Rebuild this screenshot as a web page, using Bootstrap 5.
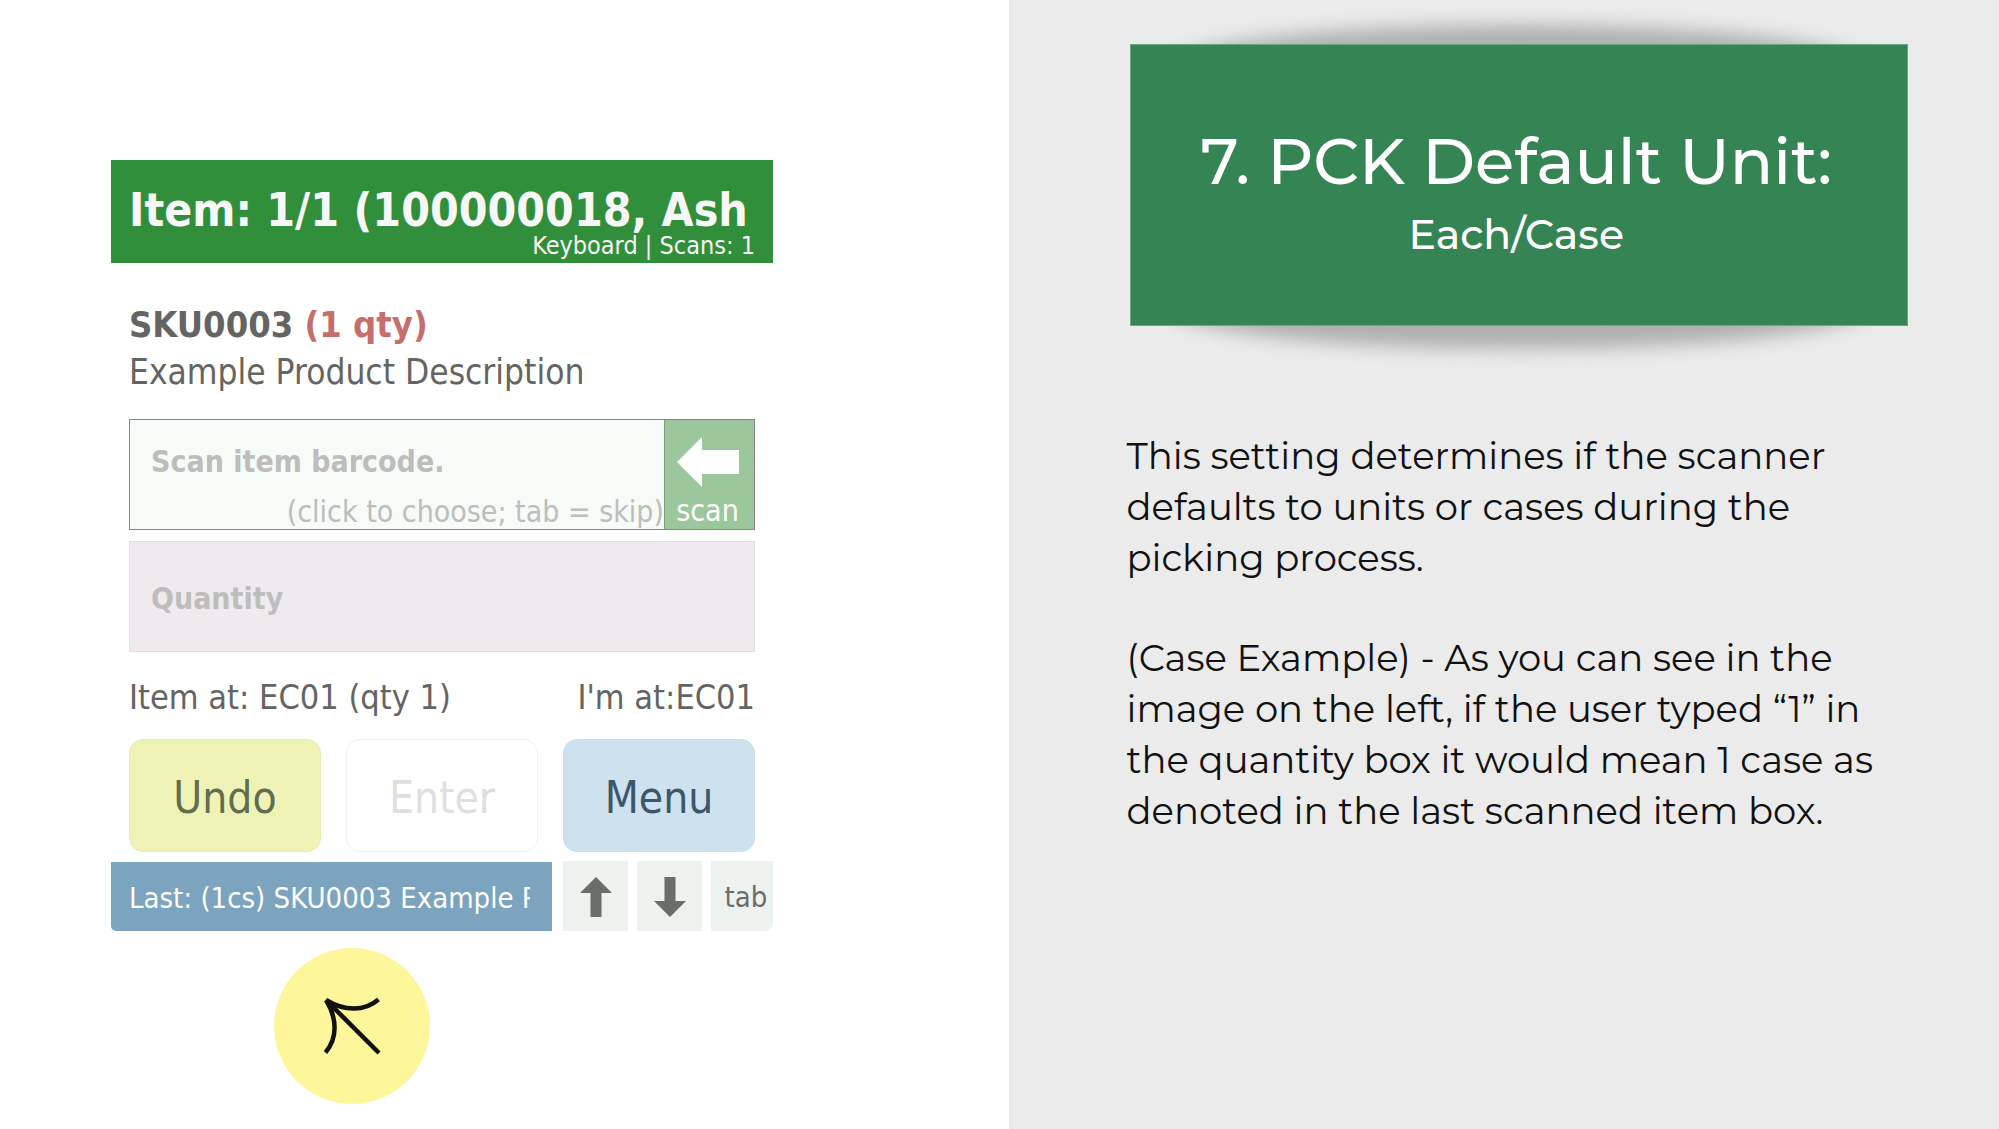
<!DOCTYPE html>
<html lang="en">
<head>
<meta charset="utf-8">
<meta name="viewport" content="width=device-width, initial-scale=1">
<title>PCK Default Unit</title>
<link href="https://cdn.jsdelivr.net/npm/bootstrap@5.3.0/dist/css/bootstrap.min.css" rel="stylesheet">
<style>
  body { background: #fff; }
  .demo-side { flex: 0 0 50.5%; padding: 160px 0 24px 111px; font-family: "DejaVu Sans Condensed", "DejaVu Sans", sans-serif; color: #646562; }
  .note-side { background: #ebebeb; padding: 44px 91px 44px 117px; font-family: Montserrat, Inter, sans-serif; color: #111; }
  .scanner { max-width: 662px; }

  .scan-header { background: #318f3b; color: #f7f7f7; padding: 24px 18px 7px; }
  .scan-header h1 { font-size: 46px; line-height: 52px; font-weight: 700; }
  .scan-status { font-size: 25px; line-height: 20px; }
  .scan-body { padding: 39px 18px 0; }
  .sku-line { font-size: 36px; line-height: 46px; font-weight: 700; }
  .sku-qty { color: #c66e69; }
  .sku-desc { font-size: 35px; line-height: 48px; }

  .scan-field { height: 111px; margin-top: 23px; border: 1px solid #858786; background: #f6fbf7; color: #bdbdbb; }
  .field-input { border: 0; background: transparent; padding: 8px 21px 0; font-size: 30px; font-weight: 700; color: #646562; min-width: 0; }
  .field-input::placeholder { color: #bdbdbb; opacity: 1; }
  .field-hint { font-size: 30px; line-height: 34px; }
  .scan-btn { width: 90px; border: 0; border-left: 1px solid #7f9f80; background: #9cc79c; color: #fff; font-size: 30px; line-height: 36px; padding: 17px 4px 0 0; }
  .qty-input { height: 111px; margin-top: 11px; border: 1px solid #e2dee1; background: #efeaee; padding-top: 4px; }

  .place-line { font-size: 34px; line-height: 48px; margin-top: 21px; }
  .action-row { gap: 25px; margin-top: 18px; }
  .action-btn { flex: 1 1 0; height: 113px; border-radius: 14px; font-size: 44px; padding: 4px 0 0; border: 1px solid transparent; }
  .btn-undo { background: #eef3b5; border-color: #e6ecb4; color: #626c4e; }
  .btn-enter, .btn-enter:disabled { background: #fff; border-color: #f1f1f1; color: #dfdfdf; opacity: 1; }
  .btn-menu { background: #cee1ef; border-color: #cadfed; color: #3a586a; }

  .foot-row { height: 70px; margin-top: 9px; }
  .last-item { width: 441px; margin-top: 1px; background: #7ca4be; color: #fff; font-size: 29px; padding: 4px 22px 0 18px; border-bottom-left-radius: 5px; }
  .foot-keys { gap: 9px; margin-left: 11px; }
  .key-btn { width: 65px; border: 0; background: #edf2ee; color: #6b6d6a; font-size: 29px; padding: 0; }
  .key-tab { width: 62px; padding: 4px 0 0 8px; border-bottom-right-radius: 8px; }
  .pointer-dot { display: block; width: 156px; height: 156px; margin: 17px 0 0 163px; }

  .title-panel { position: relative; isolation: isolate; margin: 0 0 104px 4px; }
  .title-panel::before, .title-panel::after { content: ""; position: absolute; z-index: -1; left: 5%; right: 5%; height: 84px; border-radius: 50%; background: #afafaf; filter: blur(9px); }
  .title-panel::before { top: -19px; }
  .title-panel::after { bottom: -23px; }
  .title-face { background: #348454; color: #fff; border: 1px solid #6fa686; padding: 77px 6px 66px 0; }
  .title-face h2 { font-size: 64px; line-height: 78px; font-weight: 500; margin-bottom: 9px; }
  .title-face p { font-size: 41px; line-height: 50px; font-weight: 500; }
  .note-text { font-size: 37px; line-height: 51px; margin-right: -20px; }
  .note-text p { margin-bottom: 49px; }
</style>
<script src="https://cdn.jsdelivr.net/npm/bootstrap@5.3.0/dist/js/bootstrap.bundle.min.js"></script>
</head>
<body>
<div class="d-flex min-vh-100">
  <main class="demo-side">
    <div class="scanner">
      <header class="scan-header">
        <h1 class="mb-0 text-nowrap">Item: 1/1 (100000018, Ash</h1>
        <div class="scan-status text-end">Keyboard | Scans: 1</div>
      </header>
      <div class="scan-body">
        <div class="sku-line">SKU0003 <span class="sku-qty">(1 qty)</span></div>
        <div class="sku-desc">Example Product Description</div>
        <div class="scan-field d-flex">
          <div class="d-flex flex-column flex-grow-1">
            <input class="field-input flex-grow-1 w-100" type="text" placeholder="Scan item barcode." aria-label="Scan item barcode.">
            <div class="field-hint text-end">(click to choose; tab = skip)</div>
          </div>
          <button class="scan-btn d-flex flex-column align-items-center justify-content-between" type="button">
            <svg width="62" height="50" viewBox="0 0 62 50" aria-hidden="true"><path fill="#fff" d="M0 25 25 0v13h37v24H25v13z"/></svg>
            <span>scan</span>
          </button>
        </div>
        <input class="field-input qty-input d-block w-100" type="text" placeholder="Quantity" aria-label="Quantity">
        <div class="place-line d-flex justify-content-between">
          <span>Item at: EC01 (qty 1)</span><span>I'm at:EC01</span>
        </div>
        <div class="action-row d-flex">
          <button class="btn action-btn btn-undo" type="button">Undo</button>
          <button class="btn action-btn btn-enter" type="button" disabled>Enter</button>
          <button class="btn action-btn btn-menu" type="button">Menu</button>
        </div>
      </div>
      <div class="foot-row d-flex">
        <div class="last-item d-flex align-items-center">
          <span class="overflow-hidden text-nowrap">Last: (1cs) SKU0003 Example P</span>
        </div>
        <div class="foot-keys d-flex">
          <button class="key-btn" type="button" aria-label="Up"><svg width="32" height="40" viewBox="0 0 32 40"><path fill="#6b6d6a" d="M16 0 32 16H21.500V40h-11V16H0z"/></svg></button>
          <button class="key-btn" type="button" aria-label="Down"><svg width="32" height="40" viewBox="0 0 32 40"><path fill="#6b6d6a" d="M16 40 32 24H21.500V0h-11v24H0z"/></svg></button>
          <button class="key-btn key-tab" type="button">tab</button>
        </div>
      </div>
      <svg class="pointer-dot" viewBox="0 0 156 156" aria-hidden="true">
        <circle cx="78" cy="78" r="78" fill="#fdf69b"/>
        <path d="M105 105 52 52C70 63 90 64 104.500 51.500M52 52C63 70 64 90 51.500 104.500" fill="none" stroke="#111" stroke-width="4.500" stroke-linejoin="bevel"/>
      </svg>
    </div>
  </main>
  <aside class="note-side flex-grow-1">
    <div class="title-panel">
      <div class="title-face text-center">
        <h2>7. PCK Default Unit:</h2>
        <p class="mb-0">Each/Case</p>
      </div>
    </div>
    <div class="note-text">
      <p>This setting determines if the scanner defaults to units or cases during the picking process.</p>
      <p class="mb-0">(Case Example) - As you can see in the image on the left, if the user typed “1” in the quantity box it would mean 1 case as denoted in the last scanned item box.</p>
    </div>
  </aside>
</div>
</body>
</html>
